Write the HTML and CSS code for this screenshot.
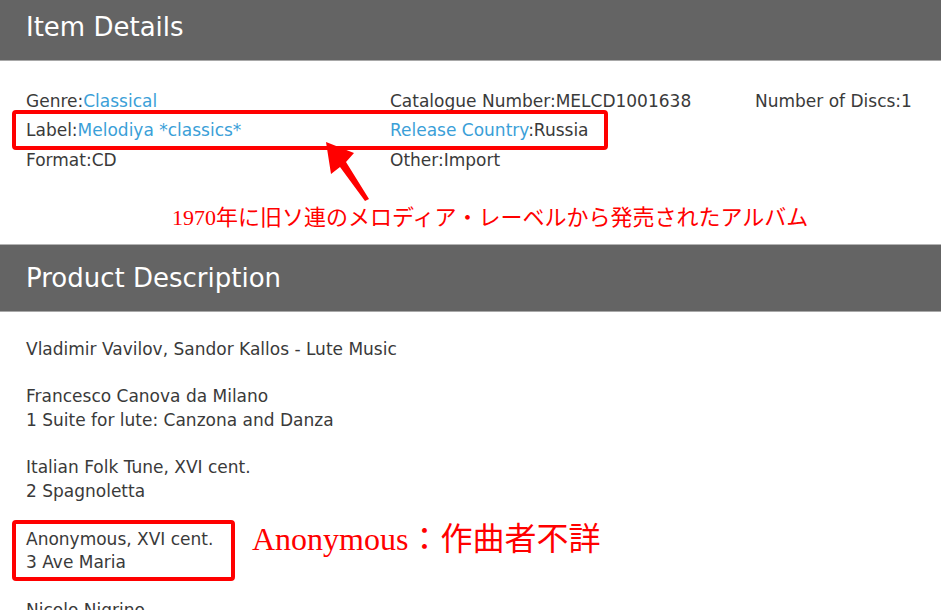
FILE: index.html
```html
<!DOCTYPE html>
<html lang="ja">
<head>
<meta charset="utf-8">
<title>Item Details</title>
<link rel="stylesheet" href="styles.css">
</head>
<body>
<main class="page">
  <section class="panel">
    <h2 class="panel-title">Item Details</h2>
    <div class="details">
      <div class="cell">Genre:<a class="link" href="#">Classical</a></div>
      <div class="cell">Catalogue Number:MELCD1001638</div>
      <div class="cell">Number of Discs:1</div>
      <div class="cell">Label:<a class="link" href="#">Melodiya *classics*</a></div>
      <div class="cell"><a class="link" href="#">Release Country</a>:Russia</div>
      <div class="cell"></div>
      <div class="cell">Format:CD</div>
      <div class="cell">Other:Import</div>
      <div class="cell"></div>
    </div>
  </section>
  <section class="panel">
    <h2 class="panel-title">Product Description</h2>
    <div class="description">
      Vladimir Vavilov, Sandor Kallos - Lute Music<br><br>
      Francesco Canova da Milano<br>
      1 Suite for lute: Canzona and Danza<br><br>
      Italian Folk Tune, XVI cent.<br>
      2 Spagnoletta<br><br>
      Anonymous, XVI cent.<br>
      3 Ave Maria<br><br>
      Nicolo Nigrino<br>
      4 Fantasia
    </div>
  </section>

  <svg class="marks" width="941" height="610" viewBox="0 0 941 610" aria-hidden="true">
    <rect x="14" y="112" width="592" height="36" rx="2" fill="none" stroke="#ff0000" stroke-width="4"/>
    <rect x="14" y="522" width="219" height="57" rx="2" fill="none" stroke="#ff0000" stroke-width="4"/>
    <polygon fill="#ff0000" points="326,142 354,153 346,162 369,199 365,201 340,167 331,174"/>
  </svg>
  <div class="note note-album">1970年に旧ソ連のメロディア・レーベルから発売されたアルバム</div>
  <div class="note note-anon">Anonymous：作曲者不詳</div>
</main>
</body>
</html>
```
FILE: styles.css
```css
html, body {
  margin: 0;
  padding: 0;
  background: #ffffff;
  overflow: hidden;
}
.page {
  position: relative;
  width: 941px;
  height: 610px;
  overflow: hidden;
  font-family: "DejaVu Sans", Verdana, "Noto Sans CJK JP", sans-serif;
  color: #3a3a3a;
}
.panel-title {
  margin: 0;
  height: 66px;
  box-sizing: content-box;
  border-top: 1px solid #b4b4b4;
  border-bottom: 1px solid #a8a8a8;
  background: #646464;
  color: #ffffff;
  font-weight: normal;
  font-size: 26px;
  line-height: 66px;
  padding-left: 26px;
}
.panel:first-child .panel-title {
  margin-top: -7px;
}
.details {
  display: grid;
  grid-template-columns: 364px 365px 1fr;
  grid-auto-rows: 29.5px;
  align-items: center;
  padding: 25px 0 69px 26px;
  font-size: 17px;
}
.cell {
  white-space: nowrap;
}
.link {
  color: #3b9fd8;
  text-decoration: none;
}
.description {
  padding: 26px 0 0 26px;
  font-size: 17px;
  line-height: 23.75px;
}
.marks {
  position: absolute;
  left: 0;
  top: 0;
  pointer-events: none;
}
.note {
  position: absolute;
  color: #ff0000;
  font-family: "Liberation Serif", "Noto Sans CJK JP", sans-serif;
  white-space: nowrap;
}
.note-album {
  left: 172px;
  top: 204px;
  font-size: 22px;
  line-height: 28px;
}
.note-anon {
  left: 252px;
  top: 518px;
  font-size: 32px;
  line-height: 42px;
}
```
